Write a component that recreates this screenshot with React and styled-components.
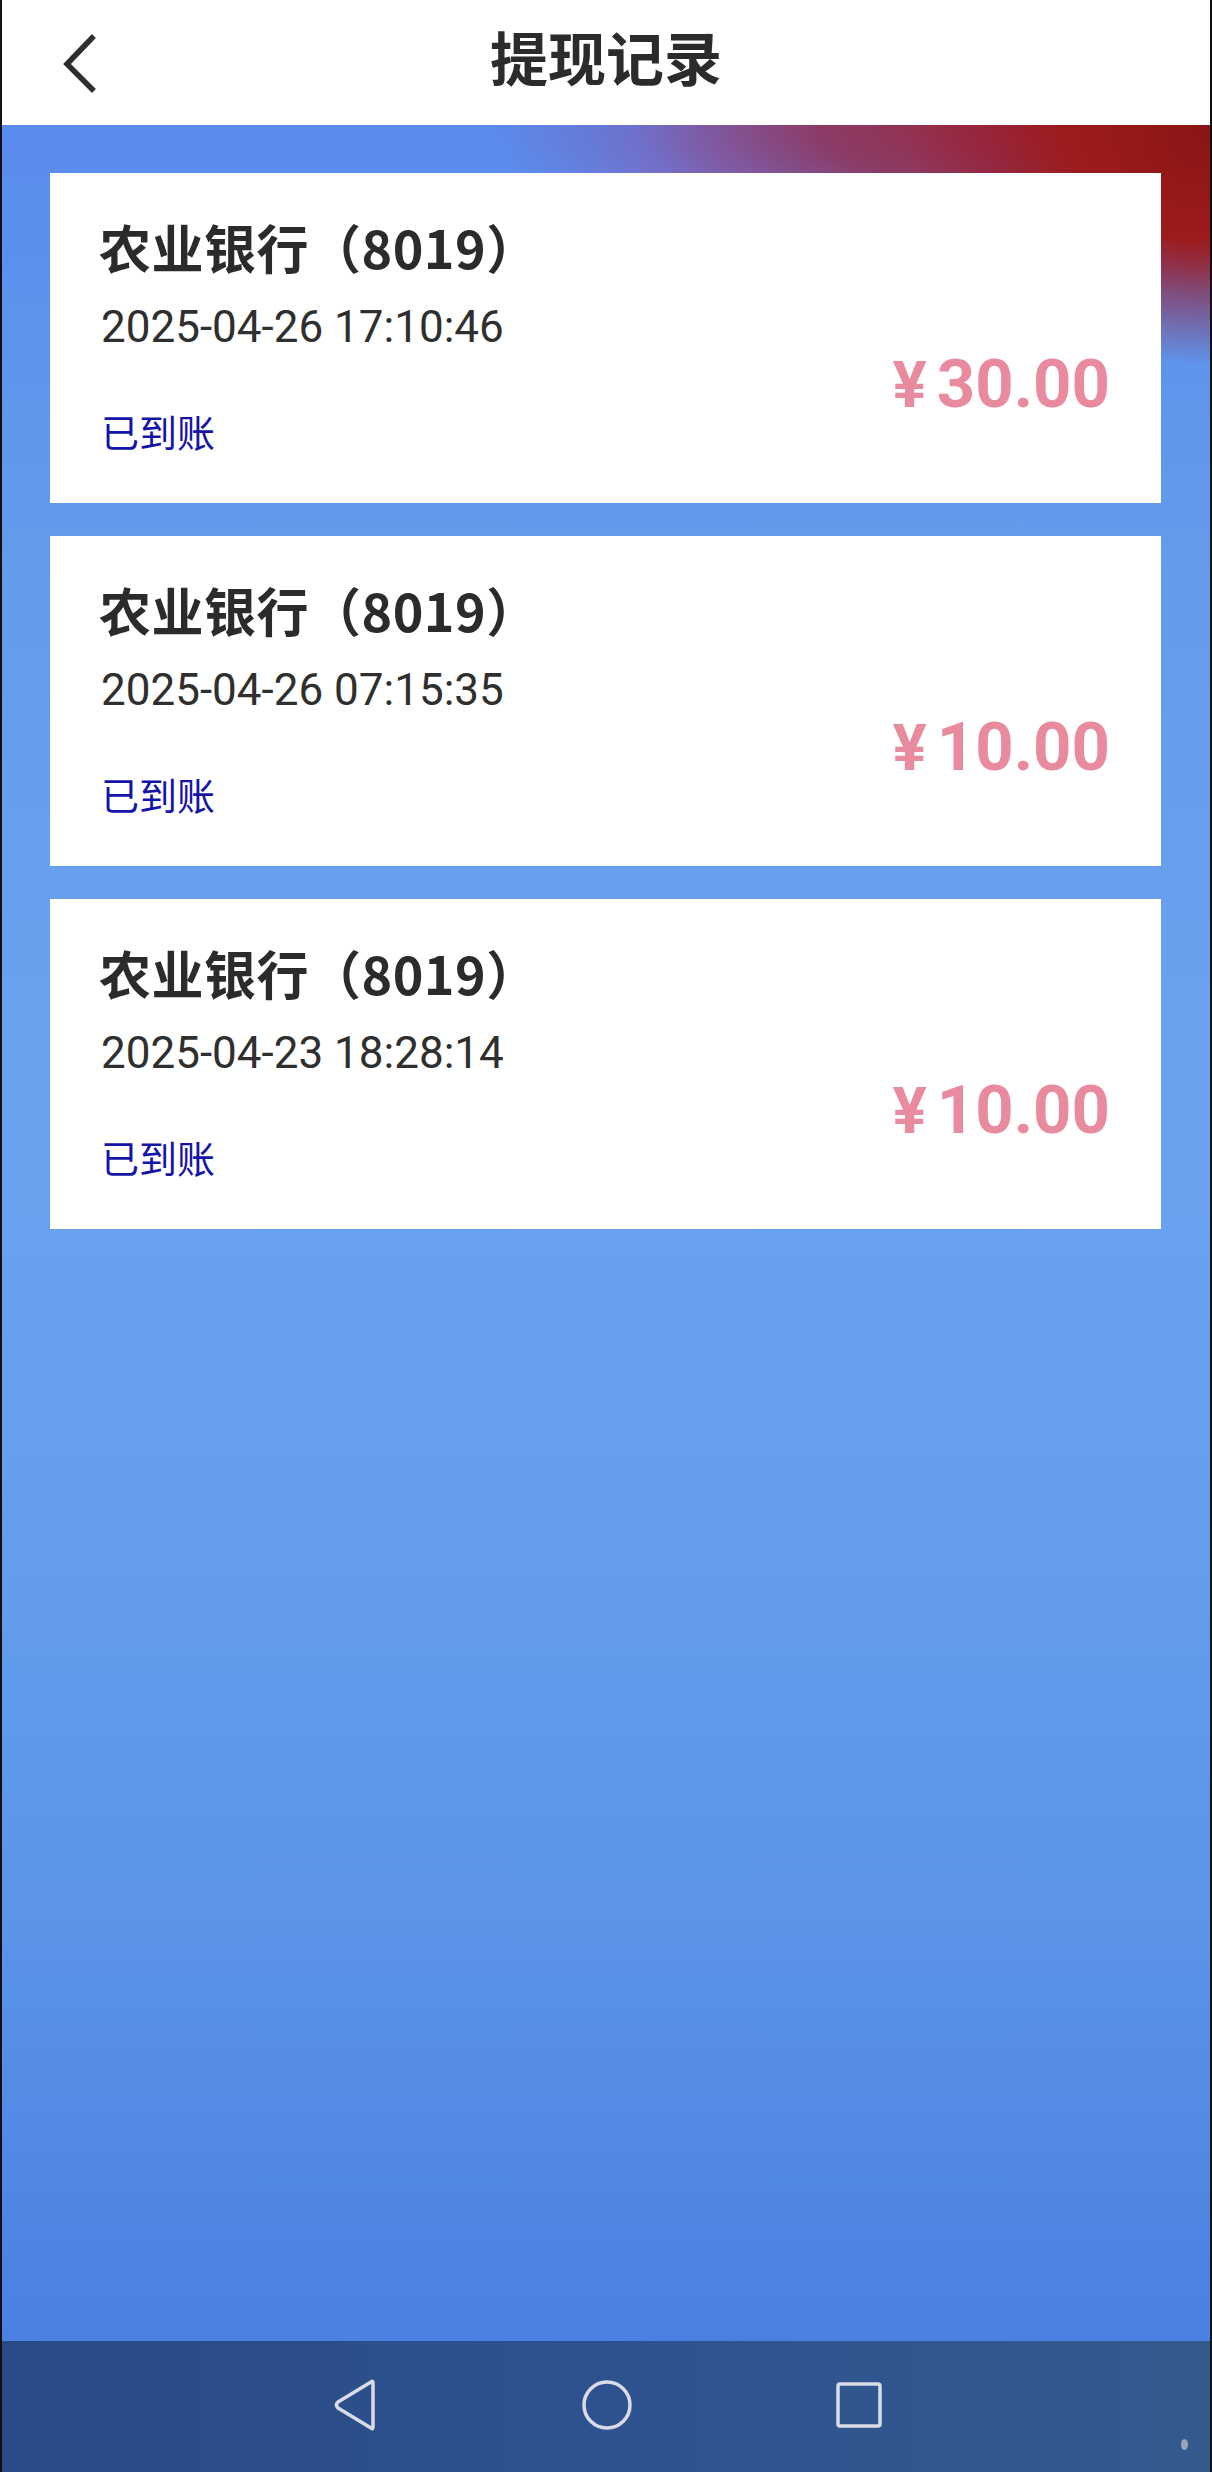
import React from "react";
import styled, { createGlobalStyle } from "styled-components";

const GlobalStyle = createGlobalStyle`
  html, body {
    margin: 0;
    padding: 0;
  }
  body {
    font-family: "Noto Sans CJK SC", "Noto Sans", sans-serif;
  }
`;

const records = [
  { bank: "农业银行（8019）", time: "2025-04-26 17:10:46", status: "已到账", amount: "30.00" },
  { bank: "农业银行（8019）", time: "2025-04-26 07:15:35", status: "已到账", amount: "10.00" },
  { bank: "农业银行（8019）", time: "2025-04-23 18:28:14", status: "已到账", amount: "10.00" },
];

const Screen = styled.div`
  width: 1212px;
  height: 2472px;
  display: flex;
  flex-direction: column;
  box-sizing: border-box;
  border-left: 2px solid #111;
  border-right: 2px solid #111;
  overflow: hidden;
`;

const Header = styled.header`
  height: 125px;
  flex: none;
  background: #fff;
  display: grid;
  grid-template-columns: 180px 1fr 180px;
  align-items: center;
`;

const BackButton = styled.button`
  border: 0;
  background: none;
  padding: 0 0 0 58px;
  height: 100%;
  display: flex;
  align-items: center;
  cursor: pointer;
`;

const Title = styled.h1`
  margin: 0;
  text-align: center;
  font-size: 58px;
  font-weight: 700;
  color: #2b2b2b;
  line-height: 1;
  padding-bottom: 14px;
`;

const Main = styled.main`
  flex: 1;
  padding: 48px 49px 0 48px;
  display: flex;
  flex-direction: column;
  gap: 33px;
  background:
    radial-gradient(ellipse 300px 230px at 100% 10px, #8a1515 0%, #9c1b1b 45%, rgba(150, 30, 50, 0.55) 72%, rgba(120, 60, 140, 0) 100%),
    radial-gradient(ellipse 600px 170px at 90% 0, rgba(165, 28, 36, 0.97) 0%, rgba(150, 40, 70, 0.8) 45%, rgba(130, 80, 160, 0.45) 75%, rgba(110, 120, 220, 0) 100%),
    linear-gradient(120deg, rgba(255,255,255,0) 46%, rgba(150, 110, 200, 0.35) 56%, rgba(255,255,255,0) 68%) top / 100% 200px no-repeat,
    linear-gradient(180deg, #5a8bee 0%, #649ceb 20%, #6aa2ee 42%, #66a0ec 60%, #5c95e9 80%, #4a80e2 100%);
`;

const Card = styled.article`
  background: #fff;
  height: 330px;
  box-sizing: border-box;
  padding: 42px 51px 0 49px;
  display: flex;
  justify-content: space-between;
`;

const Info = styled.div`
  display: flex;
  flex-direction: column;
`;

const BankName = styled.div`
  font-size: 52px;
  font-weight: 700;
  line-height: 64px;
  color: #2b2b2b;
  letter-spacing: 0.5px;
`;

const Time = styled.div`
  margin-top: 22px;
  font-family: Roboto, "Noto Sans", sans-serif;
  font-size: 44px;
  line-height: 52px;
  color: #2f2f2f;
  padding-left: 2px;
`;

const Status = styled.div`
  margin-top: 54px;
  padding-left: 2px;
  font-size: 38px;
  line-height: 48px;
  color: #1414a8;
`;

const Amount = styled.div`
  align-self: center;
  margin-top: 50px;
  font-family: Roboto, "Noto Sans", sans-serif;
  font-size: 67px;
  font-weight: 700;
  line-height: 1;
  color: #e98b9f;
  display: flex;
  align-items: baseline;
  gap: 10px;
`;

const Yen = styled.span`
  font-size: 64px;
`;

const NavBar = styled.nav`
  height: 127px;
  flex: none;
  background: linear-gradient(90deg, #284a86 0%, #2e5290 50%, #34598d 100%);
  display: flex;
  justify-content: center;
  align-items: center;
  gap: 200px;
  padding-bottom: 4px;
  padding-left: 2px;
  position: relative;
`;

const NavIcon = styled.svg`
  width: 52px;
  height: 52px;
  display: block;
`;

const CornerDot = styled.span`
  position: absolute;
  right: 22px;
  bottom: 22px;
  width: 7px;
  height: 11px;
  border-radius: 50%;
  background: #9aa4b8;
`;

function RecordCard({ bank, time, status, amount }) {
  return (
    <Card>
      <Info>
        <BankName>{bank}</BankName>
        <Time>{time}</Time>
        <Status>{status}</Status>
      </Info>
      <Amount>
        <Yen>¥</Yen>
        <span>{amount}</span>
      </Amount>
    </Card>
  );
}

export default function App() {
  return (
    <>
      <GlobalStyle />
      <Screen>
        <Header>
          <BackButton aria-label="返回">
            <svg width="40" height="60" viewBox="0 0 40 60">
              <path d="M32 5 L7 31 L32 56" fill="none" stroke="#2e2e2e" strokeWidth="5.5" strokeLinecap="square" />
            </svg>
          </BackButton>
          <Title>提现记录</Title>
          <div />
        </Header>
        <Main>
          {records.map((r, i) => (
            <RecordCard key={i} {...r} />
          ))}
        </Main>
        <NavBar>
          <NavIcon viewBox="0 0 52 52">
            <path d="M44 4 L44 48 Q44 51 42 49 L9 29 Q6 26 9 23 L42 3 Q44 1 44 4 Z" fill="none" stroke="#d9dce6" strokeWidth="3.5" strokeLinejoin="round" />
          </NavIcon>
          <NavIcon viewBox="0 0 52 52">
            <circle cx="26" cy="26" r="23" fill="none" stroke="#d9dce6" strokeWidth="3.5" />
          </NavIcon>
          <NavIcon viewBox="0 0 52 52">
            <rect x="5" y="5" width="42" height="42" rx="2" fill="none" stroke="#d9dce6" strokeWidth="3.5" />
          </NavIcon>
          <CornerDot />
        </NavBar>
      </Screen>
    </>
  );
}
